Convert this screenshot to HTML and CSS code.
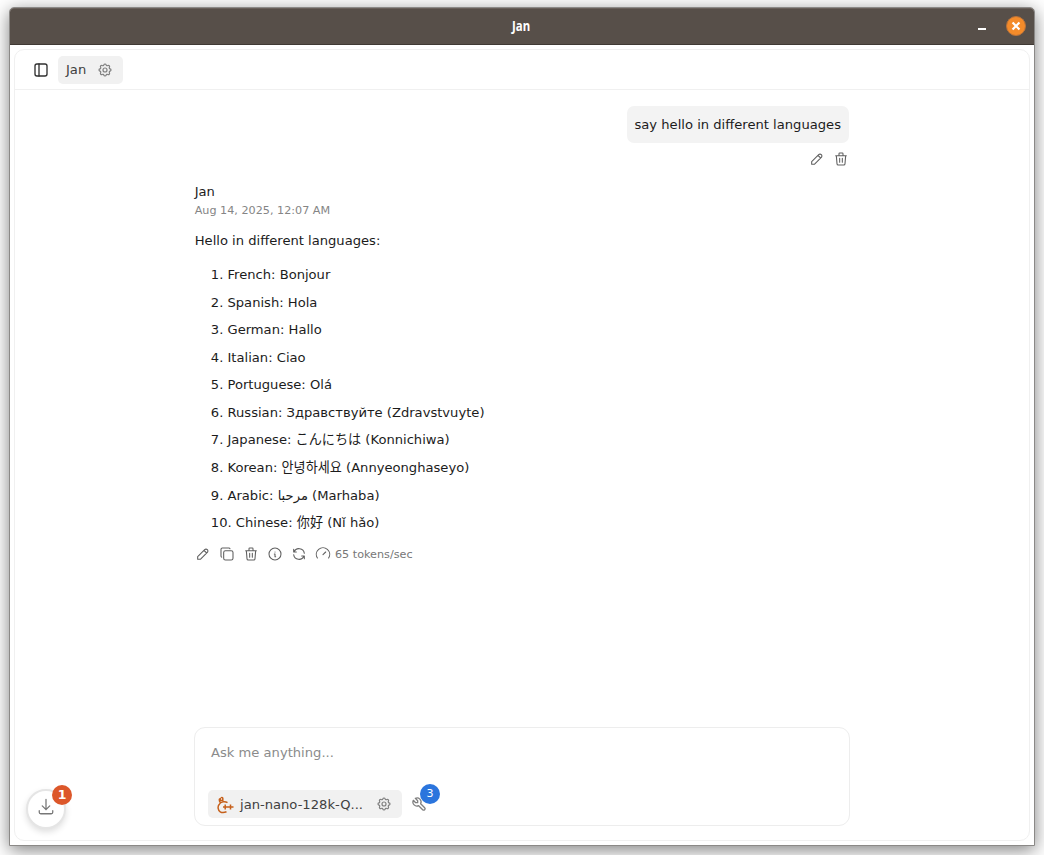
FILE: index.html
```html
<!DOCTYPE html>
<html lang="en">
<head>
<meta charset="utf-8">
<title>Jan</title>
<link rel="stylesheet" href="styles.css">
</head>
<body>
<svg class="defs" aria-hidden="true">
  <symbol id="pencil" viewBox="0 0 24 24"><path d="M4 20h4L18.500 9.500a2.828 2.828 0 1 0-4-4L4 16v4M13.500 6.500l4 4"/></symbol>
  <symbol id="trash" viewBox="0 0 24 24"><path d="M4 7h16M10 11v6M14 11v6M5 7l1 12a2 2 0 0 0 2 2h8a2 2 0 0 0 2-2l1-12M9 7V4a1 1 0 0 1 1-1h4a1 1 0 0 1 1 1v3"/></symbol>
  <symbol id="copy" viewBox="0 0 24 24"><rect x="7" y="7" width="14" height="14" rx="2.667"/><path d="M4.012 16.737A2.005 2.005 0 0 1 3 15V5c0-1.100.900-2 2-2h10c.750 0 1.158.385 1.500 1"/></symbol>
  <symbol id="info" viewBox="0 0 24 24"><circle cx="12" cy="12" r="9"/><path d="M12 9h.01M11 12h1v4h1"/></symbol>
  <symbol id="refresh" viewBox="0 0 24 24"><path d="M20 11A8.100 8.100 0 0 0 4.500 9M4 5v4h4M4 13a8.100 8.100 0 0 0 15.500 2M20 19v-4h-4"/></symbol>
  <symbol id="gauge" viewBox="0 0 24 24"><path d="M3.600 18a10 10 0 1 1 16.800 0M16 9l-4 4"/></symbol>
  <symbol id="settings" viewBox="0 0 24 24"><path d="M10.325 4.317c.426-1.756 2.924-1.756 3.350 0a1.724 1.724 0 0 0 2.573 1.066c1.543-.940 3.310.826 2.370 2.370a1.724 1.724 0 0 0 1.065 2.572c1.756.426 1.756 2.924 0 3.350a1.724 1.724 0 0 0-1.066 2.573c.940 1.543-.826 3.310-2.370 2.370a1.724 1.724 0 0 0-2.572 1.065c-.426 1.756-2.924 1.756-3.350 0a1.724 1.724 0 0 0-2.573-1.066c-1.543.940-3.310-.826-2.370-2.370a1.724 1.724 0 0 0-1.065-2.572c-1.756-.426-1.756-2.924 0-3.350a1.724 1.724 0 0 0 1.066-2.573c-.940-1.543.826-3.310 2.370-2.370 1 .608 2.296.070 2.572-1.065"/><circle cx="12" cy="12" r="3"/></symbol>
  <symbol id="tool" viewBox="0 0 24 24"><path d="M7 10h3V7L6.500 3.500a6 6 0 0 1 8 8l6 6a2 2 0 0 1-3 3l-6-6a6 6 0 0 1-8-8L7 10"/></symbol>
  <symbol id="download" viewBox="0 0 24 24"><path d="M3 17v2a2 2 0 0 0 2 2h14a2 2 0 0 0 2-2v-2M7 10.500l5 5 5-5M12 2v13.500"/></symbol>
  <symbol id="sidebar" viewBox="0 0 24 24"><rect x="3" y="3" width="18" height="18" rx="3"/><path d="M9 3v18"/></symbol>
  <symbol id="llama" viewBox="0 0 18 18"><path d="M11.500 6.700C9.500 5.300 4.500 5.300 3.200 8.500C1.300 10.500 2 14.500 4.200 15.800C6 16.900 8.500 16.600 10.500 15.800M4.300 6.600C3 4.700 3 2.500 4.300 2.800v1.700h2.500V2.200c0-1-1.500-1-1.700 0M9.200 8.500v5M7 11h10.500M14.500 8.500v5"/></symbol>
</svg>
<div class="window">
  <header class="titlebar">
    <span class="window-title">Jan</span>
    <div class="controls"><span class="minimize"></span><span class="close"><svg viewBox="0 0 18 18"><path d="M6 6l6 6M12 6l-6 6"/></svg></span></div>
  </header>
  <main class="panel">
    <div class="toolbar">
      <svg class="icon dark"><use href="#sidebar"/></svg>
      <div class="assistant">Jan<svg class="icon"><use href="#settings"/></svg></div>
    </div>
    <div class="thread">
      <div class="bubble">say hello in different languages</div>
      <div class="actions user-actions">
        <svg class="icon"><use href="#pencil"/></svg>
        <svg class="icon"><use href="#trash"/></svg>
      </div>
      <div class="author">Jan</div>
      <div class="date">Aug 14, 2025, 12:07 AM</div>
      <p class="intro">Hello in different languages:</p>
      <ol class="greetings">
        <li>1. French: Bonjour</li>
        <li>2. Spanish: Hola</li>
        <li>3. German: Hallo</li>
        <li>4. Italian: Ciao</li>
        <li>5. Portuguese: Olá</li>
        <li>6. Russian: Здравствуйте (Zdravstvuyte)</li>
        <li>7. Japanese: <span lang="ja">こんにちは</span> (Konnichiwa)</li>
        <li>8. Korean: <span lang="ko">안녕하세요</span> (Annyeonghaseyo)</li>
        <li>9. Arabic: <span lang="ar">مرحبا</span> (Marhaba)</li>
        <li>10. Chinese: <span lang="zh">你好</span> (Nǐ hǎo)</li>
      </ol>
      <div class="actions">
        <svg class="icon"><use href="#pencil"/></svg>
        <svg class="icon"><use href="#copy"/></svg>
        <svg class="icon"><use href="#trash"/></svg>
        <svg class="icon"><use href="#info"/></svg>
        <svg class="icon"><use href="#refresh"/></svg>
        <span class="speed"><svg class="icon"><use href="#gauge"/></svg>65 tokens/sec</span>
      </div>
    </div>
    <div class="composer">
      <div class="placeholder">Ask me anything...</div>
      <div class="tools">
        <div class="model"><svg class="llama"><use href="#llama"/></svg><span>jan-nano-128k-Q...</span><svg class="icon"><use href="#settings"/></svg></div>
        <div class="tool"><svg class="icon"><use href="#tool"/></svg><span class="badge blue">3</span></div>
      </div>
    </div>
    <div class="downloads"><svg class="icon"><use href="#download"/></svg><span class="badge orange">1</span></div>
  </main>
</div>
</body>
</html>
```
FILE: styles.css
```css
* { box-sizing: border-box; }
html, body { height: 100%; }
body {
  margin: 0;
  padding: 7px 9px 9px;
  overflow: hidden;
  background: #fff;
  color: #1c1c1c;
  font: 13.120px/20px "DejaVu Sans", "Noto Sans CJK SC", sans-serif;
}
.defs { position: absolute; width: 0; height: 0; }
.window {
  display: flex;
  flex-direction: column;
  height: 839px;
  border: 1px solid #8b8987;
  border-radius: 5px 5px 0 0;
  background: #fff;
  box-shadow: 0 4px 18px rgba(0, 0, 0, .5);
}
.titlebar {
  display: grid;
  grid-template-columns: 1fr auto 1fr;
  align-items: center;
  height: 37px;
  flex: none;
  border-top: 1px solid #69605a;
  border-bottom: 1px solid #403934;
  border-radius: 4px 4px 0 0;
  background: #574f49;
}
.window-title {
  grid-column: 2;
  margin: -2px 2px 0 0;
  color: #fff;
  font: bold 14px/18px "Noto Sans", sans-serif;
  transform: scaleX(.82);
}
.controls { display: flex; justify-content: flex-end; align-items: center; gap: 20px; margin-top: -2px; padding-right: 8px; }
.minimize { width: 8px; height: 2px; margin-top: 6px; background: #fff; }
.close { width: 20px; height: 20px; border: 1px solid #b9723a; border-radius: 50%; background: #f48b2a; }
.close svg { display: block; width: 18px; height: 18px; fill: none; stroke: #fff; stroke-width: 1.900; }
.close path { transform: translate(-1.350px, -1.350px) scale(1.150); }
.panel {
  position: relative;
  display: flex;
  flex-direction: column;
  flex: 1;
  margin: 4px;
  border: 1px solid #f0f0f0;
  border-radius: 10px;
}
.icon {
  display: block;
  flex: none;
  width: 16px;
  height: 16px;
  fill: none;
  stroke: #606060;
  stroke-width: 1.600;
  stroke-linecap: round;
  stroke-linejoin: round;
}
.dark { stroke: #303030; stroke-width: 2; }
.toolbar { display: flex; align-items: center; gap: 9px; height: 40px; padding-left: 18px; border-bottom: 1px solid #f0f0f0; }
.assistant { display: flex; align-items: center; justify-content: space-between; width: 65px; height: 28px; padding: 0 10px 0 8px; border-radius: 5px; background: #f1f1f1; color: #404040; }
.assistant .icon, .model .icon { stroke: #808080; stroke-width: 1.800; }
.thread { display: flex; flex-direction: column; width: 654px; margin: 16px auto 0 180px; }
.bubble { align-self: flex-end; width: 222px; height: 37px; padding: 9px 0 8px 7.500px; white-space: nowrap; border-radius: 7px; background: #f3f3f3; }
.actions { display: flex; gap: 8px; height: 16px; }
.user-actions { align-self: flex-end; margin-top: 8px; }
.author { margin-top: 15px; }
.author, .date, .intro { margin-left: -.3px; }
.date { font-size: 11.200px; line-height: 16px; color: #858585; margin-top: 1px; }
.intro { margin-top: 12px; margin-bottom: 0; }
.greetings { list-style: none; margin: 10.200px 0 0; padding: 0 0 0 15.800px; }
.greetings li { height: 27.560px; line-height: 27.560px; white-space: nowrap; }
[lang="ja"] { font-family: "Noto Sans CJK JP", sans-serif; line-height: 1; }
[lang="ko"] { font-family: "Noto Sans CJK KR", sans-serif; line-height: 1; }
[lang="zh"] { font-family: "Noto Sans CJK SC", sans-serif; line-height: 1; }
.thread > .actions:last-child { margin-top: 9.200px; }
.speed { display: flex; gap: 4px; color: #777; font-size: 11.200px; line-height: 17px; }
.composer { width: 656px; height: 99px; margin: auto 0 14px 179px; padding: 15px 13px 7px; border: 1px solid #ededed; border-radius: 11px; }
.placeholder { height: 47px; padding-left: 3px; color: #8b8b8b; }
.tools { display: flex; gap: 9px; align-items: center; }
.model { display: flex; align-items: center; width: 194px; height: 28px; padding: 1px 10px 0 8px; border-radius: 5px; background: #f1f1f1; color: #404040; }
.model .icon { margin: -1px 0 0 auto; }
.llama { width: 18px; height: 18px; margin-right: 6px; fill: none; stroke: #c6601b; stroke-width: 1.500; }
.tool { position: relative; }
.tool .icon { stroke: #808080; stroke-width: 2; }
.badge { position: absolute; display: block; width: 20px; height: 20px; border-radius: 50%; color: #fff; text-align: center; line-height: 20px; }
.blue { left: 9px; top: -12px; background: #2b75dd; font-size: 11px; }
.orange { left: 24px; top: -6px; background: #dc572a; font-size: 12.500px; font-weight: bold; }
.downloads { position: absolute; left: 11px; bottom: 11px; display: grid; place-items: center; width: 40px; height: 40px; border: 2px solid #e5e5e5; border-radius: 50%; background: #fff; box-shadow: 0 3px 6px rgba(0, 0, 0, .13); }
.downloads .icon { width: 18px; height: 18px; margin-top: -4px; stroke: #777; stroke-width: 1.700; }
```
